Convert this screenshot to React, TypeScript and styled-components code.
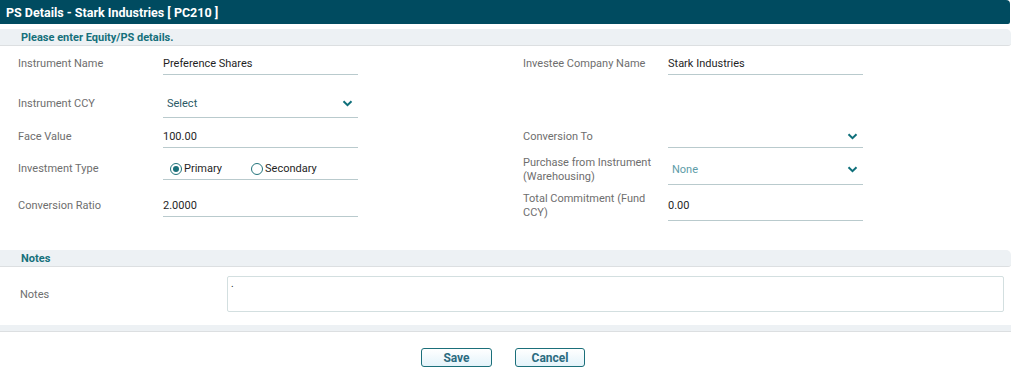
import React from "react";
import styled, { createGlobalStyle } from "styled-components";

const Global = createGlobalStyle`
  html, body { margin: 0; padding: 0; background: #fff; }
  body { font-family: Roboto, "Liberation Sans", Arial, sans-serif; }
  * { box-sizing: border-box; }
`;

const Page = styled.div`
  width: 1011px;
  display: flex;
  flex-direction: column;
`;

const Header = styled.div`
  height: 24px;
  width: 1010px;
  background: #004b60;
  border-top-right-radius: 4px;
  border-bottom-right-radius: 2px;
  color: #fff;
  font-weight: 700;
  font-size: 12.5px;
  display: flex;
  align-items: center;
  padding-left: 6px;
`;

const SectionBar = styled.div<{ $top: number }>`
  margin-top: ${(p) => p.$top}px;
  height: 17px;
  background: #edf1f4;
  border-bottom: 1px solid #dcdfe1;
  border-top-right-radius: 5px;
  border-bottom-right-radius: 3px;
  color: #15707b;
  font-weight: 700;
  font-size: 11px;
  display: flex;
  align-items: center;
  padding-left: 21px;
`;

const FormGrid = styled.div`
  display: grid;
  grid-template-columns: 505px 1fr;
`;

const Column = styled.div`
  display: flex;
  flex-direction: column;
  padding-top: 7px;
`;

const Field = styled.div<{ $h: number; $gap: number }>`
  display: flex;
  align-items: stretch;
  height: ${(p) => p.$h}px;
  margin-top: ${(p) => p.$gap}px;
`;

const Label = styled.div<{ $left: number }>`
  width: 145px;
  padding-left: ${(p) => p.$left}px;
  box-sizing: content-box;
  font-size: 11px;
  line-height: 14px;
  color: #6e6e6e;
  display: flex;
  align-items: center;
`;

const Control = styled.div<{ $tone?: "dark" | "teal" | "light" }>`
  width: 195px;
  border-bottom: 1px solid #b9cacd;
  display: flex;
  align-items: center;
  justify-content: space-between;
  padding: 0 5px 0 0;
  font-size: 11px;
  color: ${(p) =>
    p.$tone === "teal" ? "#2b5a66" : p.$tone === "light" ? "#5d9ca8" : "#1f1f1f"};
`;

const SelectText = styled.span`
  padding-left: 4px;
`;

const Chevron = () => (
  <svg width="11" height="7" viewBox="0 0 11 7">
    <path d="M1.5 1.2 L5.5 5.2 L9.5 1.2" fill="none" stroke="#0e6f7a" strokeWidth="2" />
  </svg>
);

const RadioGroup = styled.div`
  display: flex;
  align-items: center;
  gap: 29px;
  padding-left: 7px;
  padding-bottom: 1px;
`;

const RadioOption = styled.label`
  display: flex;
  align-items: center;
  gap: 2px;
  font-size: 11px;
  color: #1f1f1f;
`;

const RadioCircle = styled.span<{ $on?: boolean }>`
  width: 12px;
  height: 12px;
  border-radius: 50%;
  border: 1px solid #23747c;
  display: flex;
  align-items: center;
  justify-content: center;
  margin-top: 2px;
  &::after {
    content: "";
    width: 6px;
    height: 6px;
    border-radius: 50%;
    background: ${(p) => (p.$on ? "#19707a" : "transparent")};
  }
`;

const NotesRow = styled.div`
  display: flex;
  align-items: center;
  margin-top: 9px;
  padding-left: 20px;
`;

const NotesLabel = styled.div`
  width: 207px;
  font-size: 11px;
  color: #6e6e6e;
`;

const NotesBox = styled.div`
  width: 777px;
  height: 36px;
  border: 1px solid #d3dfe0;
  border-radius: 2px;
  font-size: 10px;
  padding: 1px 0 0 3px;
  color: #222;
`;

const FooterBar = styled.div`
  margin-top: 13px;
  height: 7px;
  background: #edf1f4;
  border-bottom: 1px solid #dcdfe1;
`;

const ButtonRow = styled.div`
  display: flex;
  justify-content: center;
  gap: 23px;
  margin-top: 16px;
  padding-right: 5px;
`;

const Button = styled.button<{ $w: number }>`
  width: ${(p) => p.$w}px;
  height: 19px;
  border: 1px solid #1b6f7a;
  border-radius: 3px;
  background: linear-gradient(#ffffff, #e4f3fa);
  color: #2b6b80;
  font-family: Roboto, "Liberation Sans", Arial, sans-serif;
  font-weight: 700;
  font-size: 12px;
  padding: 0;
  display: flex;
  align-items: center;
  justify-content: center;
`;

export default function App() {
  return (
    <Page>
      <Global />
      <Header>PS Details - Stark Industries [ PC210 ]</Header>
      <SectionBar $top={5}>Please enter Equity/PS details.</SectionBar>
      <FormGrid>
        <Column>
          <Field $h={22} $gap={0}>
            <Label $left={18}>Instrument Name</Label>
            <Control>Preference Shares</Control>
          </Field>
          <Field $h={28} $gap={15}>
            <Label $left={18}>Instrument CCY</Label>
            <Control $tone="teal">
              <SelectText>Select</SelectText>
              <Chevron />
            </Control>
          </Field>
          <Field $h={23} $gap={7}>
            <Label $left={18}>Face Value</Label>
            <Control>100.00</Control>
          </Field>
          <Field $h={22} $gap={10}>
            <Label $left={18}>Investment Type</Label>
            <Control>
              <RadioGroup>
                <RadioOption>
                  <RadioCircle $on />
                  Primary
                </RadioOption>
                <RadioOption>
                  <RadioCircle />
                  Secondary
                </RadioOption>
              </RadioGroup>
            </Control>
          </Field>
          <Field $h={23} $gap={14}>
            <Label $left={18}>Conversion Ratio</Label>
            <Control>2.0000</Control>
          </Field>
        </Column>
        <Column>
          <Field $h={22} $gap={0}>
            <Label $left={18}>Investee Company Name</Label>
            <Control>Stark Industries</Control>
          </Field>
          <Field $h={23} $gap={50}>
            <Label $left={18}>Conversion To</Label>
            <Control>
              <span />
              <Chevron />
            </Control>
          </Field>
          <Field $h={31} $gap={6}>
            <Label $left={18}>Purchase from Instrument (Warehousing)</Label>
            <Control $tone="light">
              <SelectText>None</SelectText>
              <Chevron />
            </Control>
          </Field>
          <Field $h={31} $gap={5}>
            <Label $left={18}>Total Commitment (Fund CCY)</Label>
            <Control>0.00</Control>
          </Field>
        </Column>
      </FormGrid>
      <SectionBar $top={29}>Notes</SectionBar>
      <NotesRow>
        <NotesLabel>Notes</NotesLabel>
        <NotesBox>.</NotesBox>
      </NotesRow>
      <FooterBar />
      <ButtonRow>
        <Button $w={71}>Save</Button>
        <Button $w={70}>Cancel</Button>
      </ButtonRow>
    </Page>
  );
}
